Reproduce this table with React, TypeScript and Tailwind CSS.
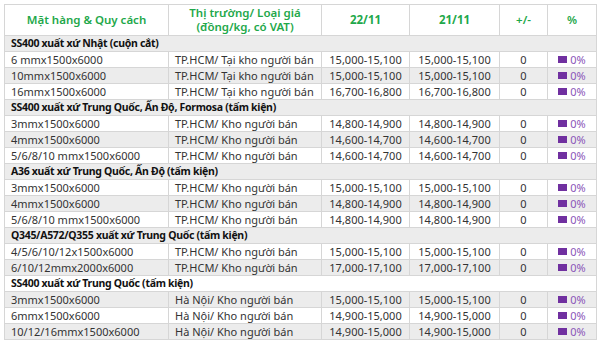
import React from "react";

type Row =
  | { kind: "group"; title: string }
  | { kind: "item"; spec: string; market: string; now: string; prev: string };

const rows: Row[] = [
  { kind: "group", title: "SS400 xuất xứ Nhật (cuộn cắt)" },
  { kind: "item", spec: "6 mmx1500x6000", market: "TP.HCM/ Tại kho người bán", now: "15,000-15,100", prev: "15,000-15,100" },
  { kind: "item", spec: "10mmx1500x6000", market: "TP.HCM/ Tại kho người bán", now: "15,000-15,100", prev: "15,000-15,100" },
  { kind: "item", spec: "16mmx1500x6000", market: "TP.HCM/ Tại kho người bán", now: "16,700-16,800", prev: "16,700-16,800" },
  { kind: "group", title: "SS400 xuất xứ Trung Quốc, Ấn Độ, Formosa (tấm kiện)" },
  { kind: "item", spec: "3mmx1500x6000", market: "TP.HCM/ Kho người bán", now: "14,800-14,900", prev: "14,800-14,900" },
  { kind: "item", spec: "4mmx1500x6000", market: "TP.HCM/ Kho người bán", now: "14,600-14,700", prev: "14,600-14,700" },
  { kind: "item", spec: "5/6/8/10 mmx1500x6000", market: "TP.HCM/ Kho người bán", now: "14,600-14,700", prev: "14,600-14,700" },
  { kind: "group", title: "A36 xuất xứ Trung Quốc, Ấn Độ (tấm kiện)" },
  { kind: "item", spec: "3mmx1500x6000", market: "TP.HCM/ Kho người bán", now: "15,000-15,100", prev: "15,000-15,100" },
  { kind: "item", spec: "4mmx1500x6000", market: "TP.HCM/ Kho người bán", now: "14,800-14,900", prev: "14,800-14,900" },
  { kind: "item", spec: "5/6/8/10 mmx1500x6000", market: "TP.HCM/ Kho người bán", now: "14,800-14,900", prev: "14,800-14,900" },
  { kind: "group", title: "Q345/A572/Q355 xuất xứ Trung Quốc (tấm kiện)" },
  { kind: "item", spec: "4/5/6/10/12x1500x6000", market: "TP.HCM/ Kho người bán", now: "15,000-15,100", prev: "15,000-15,100" },
  { kind: "item", spec: "6/10/12mmx2000x6000", market: "TP.HCM/ Kho người bán", now: "17,000-17,100", prev: "17,000-17,100" },
  { kind: "group", title: "SS400 xuất xứ Trung Quốc (tấm kiện)" },
  { kind: "item", spec: "3mmx1500x6000", market: "Hà Nội/ Kho người bán", now: "15,000-15,100", prev: "15,000-15,100" },
  { kind: "item", spec: "6mmx1500x6000", market: "Hà Nội/ Kho người bán", now: "14,900-15,000", prev: "14,900-15,000" },
  { kind: "item", spec: "10/12/16mmx1500x6000", market: "Hà Nội/ Kho người bán", now: "14,900-15,000", prev: "14,900-15,000" },
];

const td = "border border-[#d6d6d6] p-0";
const box = "h-[15px] leading-[15px] overflow-hidden whitespace-nowrap";

export default function App() {
  return (
    <div className="w-[600px] h-[344px] overflow-hidden bg-white pl-[4px] pt-[4px] font-['Noto_Sans',sans-serif] text-[11px] text-[#333]">
      <table className="w-[592px] border-collapse table-fixed">
        <colgroup>
          <col className="w-[164px]" />
          <col className="w-[153px]" />
          <col className="w-[88px]" />
          <col className="w-[90px]" />
          <col className="w-[48px]" />
          <col className="w-[49px]" />
        </colgroup>
        <thead>
          <tr className="text-[#1ea84a] text-[11.5px]">
            <th className={`${td} font-semibold`}>
              <div className="h-[30px] flex items-center justify-center">Mặt hàng &amp; Quy cách</div>
            </th>
            <th className={`${td} font-semibold`}>
              <div className="h-[30px] flex flex-col items-center justify-center leading-[14px]">
                <span>Thị trường/ Loại giá</span>
                <span>(đồng/kg, có VAT)</span>
              </div>
            </th>
            <th className={`${td} font-bold`}>
              <div className="h-[30px] flex items-center justify-center">22/11</div>
            </th>
            <th className={`${td} font-bold`}>
              <div className="h-[30px] flex items-center justify-center">21/11</div>
            </th>
            <th className={`${td} font-semibold`}>
              <div className="h-[30px] flex items-center justify-center">+/-</div>
            </th>
            <th className={`${td} font-semibold`}>
              <div className="h-[30px] flex items-center justify-center">%</div>
            </th>
          </tr>
        </thead>
        <tbody>
          {rows.map((r, i) => {
            const bg = i % 2 === 0 ? "bg-[#ececec]" : "bg-white";
            if (r.kind === "group") {
              return (
                <tr key={i} className={bg}>
                  <td colSpan={6} className={td}>
                    <div className={`${box} pl-[6px] font-bold text-[10.5px] text-[#111] tracking-[-0.3px]`}>{r.title}</div>
                  </td>
                </tr>
              );
            }
            return (
              <tr key={i} className={bg}>
                <td className={td}>
                  <div className={`${box} pl-[6px]`}>{r.spec}</div>
                </td>
                <td className={td}>
                  <div className={`${box} pl-[6px]`}>{r.market}</div>
                </td>
                <td className={td}>
                  <div className={`${box} text-center`}>{r.now}</div>
                </td>
                <td className={td}>
                  <div className={`${box} text-center`}>{r.prev}</div>
                </td>
                <td className={td}>
                  <div className={`${box} text-center`}>0</div>
                </td>
                <td className={td}>
                  <div className={`${box} flex items-center justify-center gap-[3px] text-[#8a55b8]`}>
                    <span className="w-[9px] h-[7px] bg-[#7030a0]" />
                    <span>0%</span>
                  </div>
                </td>
              </tr>
            );
          })}
        </tbody>
      </table>
    </div>
  );
}
